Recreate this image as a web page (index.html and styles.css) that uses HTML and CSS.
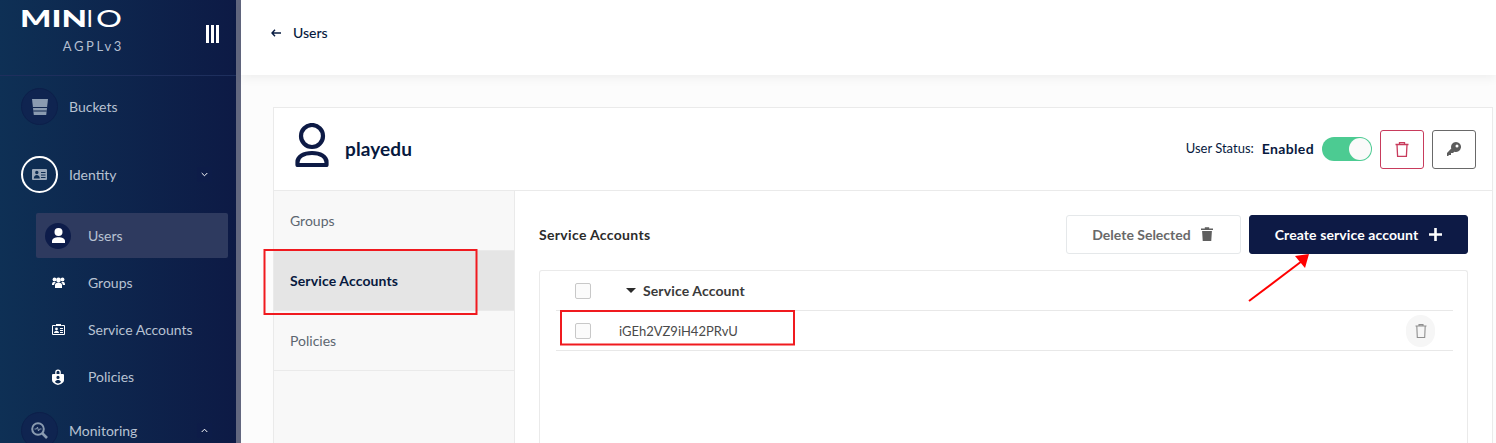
FILE: index.html
```html
<!DOCTYPE html>
<html lang="en">
<head>
<meta charset="utf-8">
<title>Users - MinIO</title>
<link rel="stylesheet" href="styles.css">
</head>
<body>
<div class="app">
  <aside class="sidebar">
    <div class="brand">
      <div class="logo-wrap">
        <svg class="logo" width="101" height="22" viewBox="0 0 101 22"><text class="logo-bold" x="-1" y="18" textLength="67" lengthAdjust="spacingAndGlyphs">MIN</text><text class="logo-thin" x="65.500" y="18">I</text><text class="logo-thin" x="75" y="18" textLength="26" lengthAdjust="spacingAndGlyphs">O</text></svg>
        <div class="license">AGPLv3</div>
      </div>
      <div class="menu-toggle"><i></i><i></i><i></i></div>
    </div>
    <nav class="nav">
      <div class="nav-item">
        <span class="nav-circle"><svg width="16" height="16" viewBox="0 0 16 16"><path d="M0 0h16l-1.800 16H1.800z" fill="#8a9bb0"/><path d="M.9 8.500h14.200M1.300 12h13.400" stroke="#10264f" stroke-width="1"/></svg></span>
        <span class="nav-label">Buckets</span>
      </div>
      <div class="nav-item">
        <span class="nav-circle active"><svg width="15" height="11" viewBox="0 0 15 11"><path fill-rule="evenodd" d="M1 0h13a1 1 0 0 1 1 1v9a1 1 0 0 1-1 1H1a1 1 0 0 1-1-1V1a1 1 0 0 1 1-1zm3.800 1.800a1.700 1.700 0 1 0 0 3.400 1.700 1.700 0 0 0 0-3.400zM1.800 9.500h6c0-2-1.300-3.500-3-3.500s-3 1.500-3 3.500zM9 3v1h4.500V3zm0 2.500v1h4.500v-1zM9 8v1h4.500V8z" fill="#9aa8ba"/></svg></span>
        <span class="nav-label">Identity</span>
        <span class="chev"><svg width="7" height="5" viewBox="0 0 7 5"><path d="M.7 1l2.800 2.800L6.300 1" fill="none" stroke="#fff" stroke-width="1"/></svg></span>
      </div>
      <div class="sub-list">
        <div class="sub-item current">
          <span class="sub-icon disc"><svg width="13" height="15" viewBox="0 0 13 15"><circle cx="6.500" cy="4" r="4" fill="#fff"/><path d="M0 15v-2c0-2.500 3-3.800 6.500-3.800s6.500 1.300 6.500 3.800v2z" fill="#fff"/></svg></span>
          <span class="sub-label">Users</span>
        </div>
        <div class="sub-item">
          <span class="sub-icon"><svg width="13" height="11" viewBox="0 0 13 11"><circle cx="6.500" cy="3" r="2.400" fill="#fff"/><circle cx="2.500" cy="2.400" r="1.900" fill="#fff"/><circle cx="10.500" cy="2.400" r="1.900" fill="#fff"/><path d="M3 11V8c0-1.500 1.500-2.500 3.500-2.500S10 6.500 10 8v3z" fill="#fff"/><path d="M0 7.500C0 5.500 1.200 4.800 2.500 4.800c.7 0 1 .2 1.300.4C2.800 6 2.200 6.800 2.200 8H0zM13 7.500c0-2-1.200-2.700-2.500-2.700-.7 0-1 .2-1.300.4 1 .8 1.600 1.600 1.600 2.800H13z" fill="#fff"/></svg></span>
          <span class="sub-label">Groups</span>
        </div>
        <div class="sub-item">
          <span class="sub-icon"><svg width="13" height="11" viewBox="0 0 13 11"><path d="M.5 1.500h3.300M9.200 1.500h3.300v9H.5v-9" fill="none" stroke="#fff"/><path d="M4 0h5v2H4z" fill="#fff"/><circle cx="4.500" cy="5" r="1.400" fill="#fff"/><path d="M2 9c0-1.500 1-2 2.500-2S7 7.500 7 9z" fill="#fff"/><path d="M8 4.500h3M8 6.500h3M8 8.500h3" stroke="#fff"/></svg></span>
          <span class="sub-label">Service Accounts</span>
        </div>
        <div class="sub-item">
          <span class="sub-icon"><svg width="12" height="16" viewBox="0 0 12 16"><path fill-rule="evenodd" d="M3.200 5V3.200a2.800 2.800 0 0 1 5.600 0V5H11a1 1 0 0 1 1 1v5c0 2.500-2.500 4-6 5-3.500-1-6-2.500-6-5V6a1 1 0 0 1 1-1zM4.500 5h3V3.200a1.500 1.500 0 0 0-3 0zM6 6.800a1.600 1.600 0 1 0 0 3.200 1.600 1.600 0 0 0 0-3.200zM3 13c.6-1.400 1.700-2 3-2s2.400.6 3 2c-.8.700-1.800 1.200-3 1.500-1.200-.3-2.200-.8-3-1.500z" fill="#fff"/></svg></span>
          <span class="sub-label">Policies</span>
        </div>
      </div>
      <div class="nav-item last">
        <span class="nav-circle"><svg width="17" height="17" viewBox="0 0 17 17"><circle cx="7" cy="7" r="5.800" fill="none" stroke="#8a9bb0" stroke-width="2"/><path d="M11 11l5 5" stroke="#8a9bb0" stroke-width="2.600"/><path d="M3.500 7h2l1-2 1 4 1-2h2" fill="none" stroke="#8a9bb0"/></svg></span>
        <span class="nav-label">Monitoring</span>
        <span class="chev"><svg width="7" height="5" viewBox="0 0 7 5"><path d="M.7 4L3.500 1.200 6.300 4" fill="none" stroke="#fff" stroke-width="1"/></svg></span>
      </div>
    </nav>
  </aside>
  <main class="main">
    <header class="topbar">
      <svg width="10" height="8" viewBox="0 0 10 8"><path d="M10 4H1.500M4 .8L1 4l3 3.200" fill="none" stroke="#081c42" stroke-width="1.400"/></svg>
      <span class="crumb">Users</span>
    </header>
    <section class="content">
      <div class="card">
        <div class="card-head">
          <svg class="user-icon" width="34" height="44" viewBox="0 0 34 44"><circle cx="17" cy="13" r="11" fill="none" stroke="#0d1a45" stroke-width="4.200"/><path d="M2.500 42v-3c0-5.500 6-9 14.500-9s14.500 3.500 14.500 9v3z" fill="none" stroke="#0d1a45" stroke-width="4.200" stroke-linejoin="round"/></svg>
          <h1 class="user-name">playedu</h1>
          <div class="status">
            <span class="status-label">User Status:</span>
            <span class="status-value">Enabled</span>
            <span class="switch"><span class="knob"></span></span>
            <button class="icon-btn danger"><svg width="14" height="15" viewBox="0 0 14 15"><path d="M.5 2.500h13M4.500 2.500V.7h5v1.800M2 2.500l.6 11.800h8.800L12 2.500" fill="none" stroke="#c83b5c" stroke-width="1.300"/></svg></button>
            <button class="icon-btn"><svg width="14" height="14" viewBox="0 0 14 14"><path fill-rule="evenodd" d="M9 0a5 5 0 1 1-1.700 9.700L6 11H4v2H2.200L1 14H0v-3l4.300-4.400A5 5 0 0 1 9 0zm1 2.500a1.500 1.500 0 1 0 0 3 1.500 1.500 0 0 0 0-3z" fill="#5c5c5c"/></svg></button>
          </div>
        </div>
        <div class="card-body">
          <ul class="tabs">
            <li class="tab">Groups</li>
            <li class="tab selected">Service Accounts</li>
            <li class="tab">Policies</li>
          </ul>
          <div class="panel">
            <div class="panel-head">
              <h2 class="panel-title">Service Accounts</h2>
              <div class="actions">
                <button class="btn btn-light">Delete Selected <svg width="12" height="14" viewBox="0 0 11 14" preserveAspectRatio="none"><path d="M0 1.500h3.500V.3h4v1.200H11V3H0zM1 4h9l-.6 10H1.600z" fill="#5f5f5f"/></svg></button>
                <button class="btn btn-dark">Create service account <svg width="13" height="13" viewBox="0 0 13 13"><path d="M6.500 0v13M0 6.500h13" stroke="#fff" stroke-width="2.600"/></svg></button>
              </div>
            </div>
            <div class="table">
              <div class="row head-row">
                <span class="check"></span>
                <span class="sort-caret"></span>
                <span class="col-title">Service Account</span>
              </div>
              <div class="row data-row">
                <span class="check"></span>
                <span class="cell">iGEh2VZ9iH42PRvU</span>
                <span class="row-del"><svg width="12" height="14" viewBox="0 0 12 14"><path d="M.5 2h11M4 2V.6h4V2M1.800 2l.5 11.500h7.400L10.200 2" fill="none" stroke="#8f8f8f" stroke-width="1.100"/></svg></span>
              </div>
            </div>
          </div>
        </div>
      </div>
    </section>
  </main>
</div>
<svg class="annotations" width="1496" height="443" viewBox="0 0 1496 443">
  <rect x="264.500" y="250" width="212" height="64" fill="none" stroke="#f01a1f" stroke-width="2"/>
  <rect x="561" y="311" width="233" height="33.500" fill="none" stroke="#f01a1f" stroke-width="2"/>
  <path d="M1249 301L1302 261" stroke="#ff0000" stroke-width="2"/>
  <path d="M1295 256L1309 254 1305 268z" fill="#ff0000"/>
</svg>
</body>
</html>
```
FILE: styles.css
```css
* { box-sizing: border-box; }
html, body { margin: 0; height: 443px; overflow: hidden; }
body { font-family: Lato, "Liberation Sans", sans-serif; background: #fcfcfc; color: #07193e; }
.app { display: flex; height: 443px; overflow: hidden; }

.sidebar {
  width: 241px; flex: none; height: 443px; overflow: hidden;
  background: linear-gradient(90deg, #0e3055 0%, #0d1a45 100%);
  border-right: 5px solid #62677f;
  color: #fff;
}
.brand {
  height: 76px; display: flex; align-items: flex-start; padding: 9px 0 0 21px;
  border-bottom: 1px solid #1e2f5d;
}
.logo-wrap { width: 101px; }
.logo { display: block; overflow: visible; }
.logo-bold { font-family: Lato, sans-serif; font-weight: 900; font-size: 23px; fill: #fff; }
.logo-thin { font-family: Lato, sans-serif; font-weight: 400; font-size: 23px; fill: #fff; }
.license { margin: 8px -2px 0 0; text-align: right; font-size: 13px; letter-spacing: 2.600px; color: #b4bfd0; line-height: 15px; }
.menu-toggle { display: flex; gap: 2px; margin: 16px 0 0 84px; }
.menu-toggle i { display: block; width: 3px; height: 18px; background: #fff; }

.nav { padding-top: 8px; }
.nav-item { height: 45px; display: flex; align-items: center; padding-left: 21px; margin-bottom: 23px; }
.nav-item.last { margin: 9px 0 0; }
.nav-circle {
  width: 37px; height: 37px; border-radius: 50%; flex: none;
  display: flex; align-items: center; justify-content: center;
  background: #0f2450; border: 1px solid #0c1f4a;
}
.nav-circle.active { background: transparent; border: 2px solid #fff; }
.nav-label { margin-left: 11px; font-size: 14px; color: #b8c2d2; }
.chev {
  width: 15px; height: 15px; margin-left: auto; margin-right: 24px;
  display: flex; align-items: center; justify-content: center; background: #0d1c48;
}
.nav-item + .sub-list { margin-top: -7px; }
.sub-list { padding-left: 36px; padding-right: 8px; display: flex; flex-direction: column; gap: 2px; }
.sub-item { height: 45px; display: flex; align-items: center; border-radius: 2px; }
.sub-item.current { background: #2e3a5f; }
.sub-icon { width: 26px; height: 26px; margin-left: 9px; flex: none; display: flex; align-items: center; justify-content: center; }
.sub-icon.disc { background: #0d1c4a; border-radius: 50%; }
.sub-label { margin-left: 17px; font-size: 14px; color: #b8c2d2; }

.main { flex: 1; min-width: 0; display: flex; flex-direction: column; }
.topbar {
  height: 75px; flex: none; background: #fff; display: flex; align-items: center; gap: 12px;
  padding: 0 0 10px 30px; box-shadow: 0 3px 10px rgba(0,0,0,.06);
}
.crumb { font-size: 14px; font-weight: 500; color: #07193e; }
.content { padding: 32px 3px 0 32px; flex: 1; min-height: 0; }
.card { background: #fff; border: 1px solid #eaeaea; border-bottom: 0; height: 336px; display: flex; flex-direction: column; }
.card-head { height: 83px; flex: none; display: flex; align-items: center; padding: 0 16px 0 21px; border-bottom: 1px solid #eaeaea; }
.user-icon { flex: none; margin-top: -8px; }
.user-name { margin: 0 0 2px 16px; font-size: 19px; letter-spacing: .1px; font-weight: 700; color: #07193e; }
.status { margin-left: auto; display: flex; align-items: center; }
.status-label { font-size: 13px; color: #07193e; margin-bottom: 2px; }
.status-value { margin: 0 0 2px 8px; font-size: 14px; letter-spacing: .35px; font-weight: 700; color: #07193e; }
.switch { margin: 0 8px; width: 50px; height: 24px; border-radius: 12px; background: #4ccb92; position: relative; display: block; }
.knob { position: absolute; right: 1px; top: 1px; width: 22px; height: 22px; border-radius: 50%; background: #fafafa; }
.icon-btn { width: 44px; height: 39px; padding: 0; background: #fff; border: 1px solid #696969; border-radius: 3px; display: flex; align-items: center; justify-content: center; margin-right: 8px; }
.icon-btn:last-child { margin-right: 0; }
.icon-btn.danger { border-color: #c83b5c; }
.card-body { flex: 1; min-height: 0; display: flex; }
.tabs { list-style: none; margin: 0; padding: 0; width: 241px; flex: none; background: #f8f8f8; border-right: 1px solid #eaeaea; }
.tab { height: 60px; padding-left: 16px; display: flex; align-items: center; font-size: 14px; color: #5c6670; border-bottom: 1px solid #eaeaea; }
.tab.selected { background: #e5e5e5; font-weight: 700; letter-spacing: .12px; color: #07193e; }
.panel { flex: 1; min-width: 0; padding: 23px 24px 0 24px; }
.panel-head { display: flex; align-items: center; justify-content: space-between; height: 40px; }
.panel-title { margin: 0; font-size: 14px; font-weight: 700; letter-spacing: .33px; color: #2b2b2b; }
.actions { display: flex; gap: 8px; }
.btn { height: 39px; border-radius: 3px; font-family: inherit; font-size: 14px; font-weight: 700; display: flex; align-items: center; justify-content: center; gap: 11px; padding: 0; }
.btn-light { width: 175px; background: #fff; border: 1px solid #e5e8ea; color: #696969; gap: 10px; padding-right: 2px; }
.btn-dark { width: 219px; background: #0d1a45; border: 1px solid #0d1a45; color: #fff; letter-spacing: .1px; }
.table { margin-top: 16px; height: 200px; border: 1px solid #eaeaea; border-bottom: 0; border-radius: 3px 3px 0 0; padding: 0 14px 0 16px; }
.row { display: flex; align-items: center; border-bottom: 1px solid #e8e8e8; }
.head-row { height: 40px; }
.data-row { height: 40px; }
.check { width: 16px; height: 16px; margin-left: 19px; flex: none; background: #fbfbfb; border: 1px solid #c8c8c8; border-radius: 2px; }
.sort-caret { margin-left: 35px; width: 0; height: 0; border-left: 5px solid transparent; border-right: 5px solid transparent; border-top: 5px solid #2b2b2b; }
.col-title { margin-left: 7px; font-size: 14px; font-weight: 700; letter-spacing: .12px; color: #3a3a3a; }
.cell { margin-left: 28px; font-size: 13px; color: #4a4a4a; }
.row-del { margin-left: auto; margin-right: 18px; width: 29px; height: 32px; border-radius: 15px; background: #f6f6f6; display: flex; align-items: center; justify-content: center; }
.annotations { position: absolute; left: 0; top: 0; pointer-events: none; }
```
